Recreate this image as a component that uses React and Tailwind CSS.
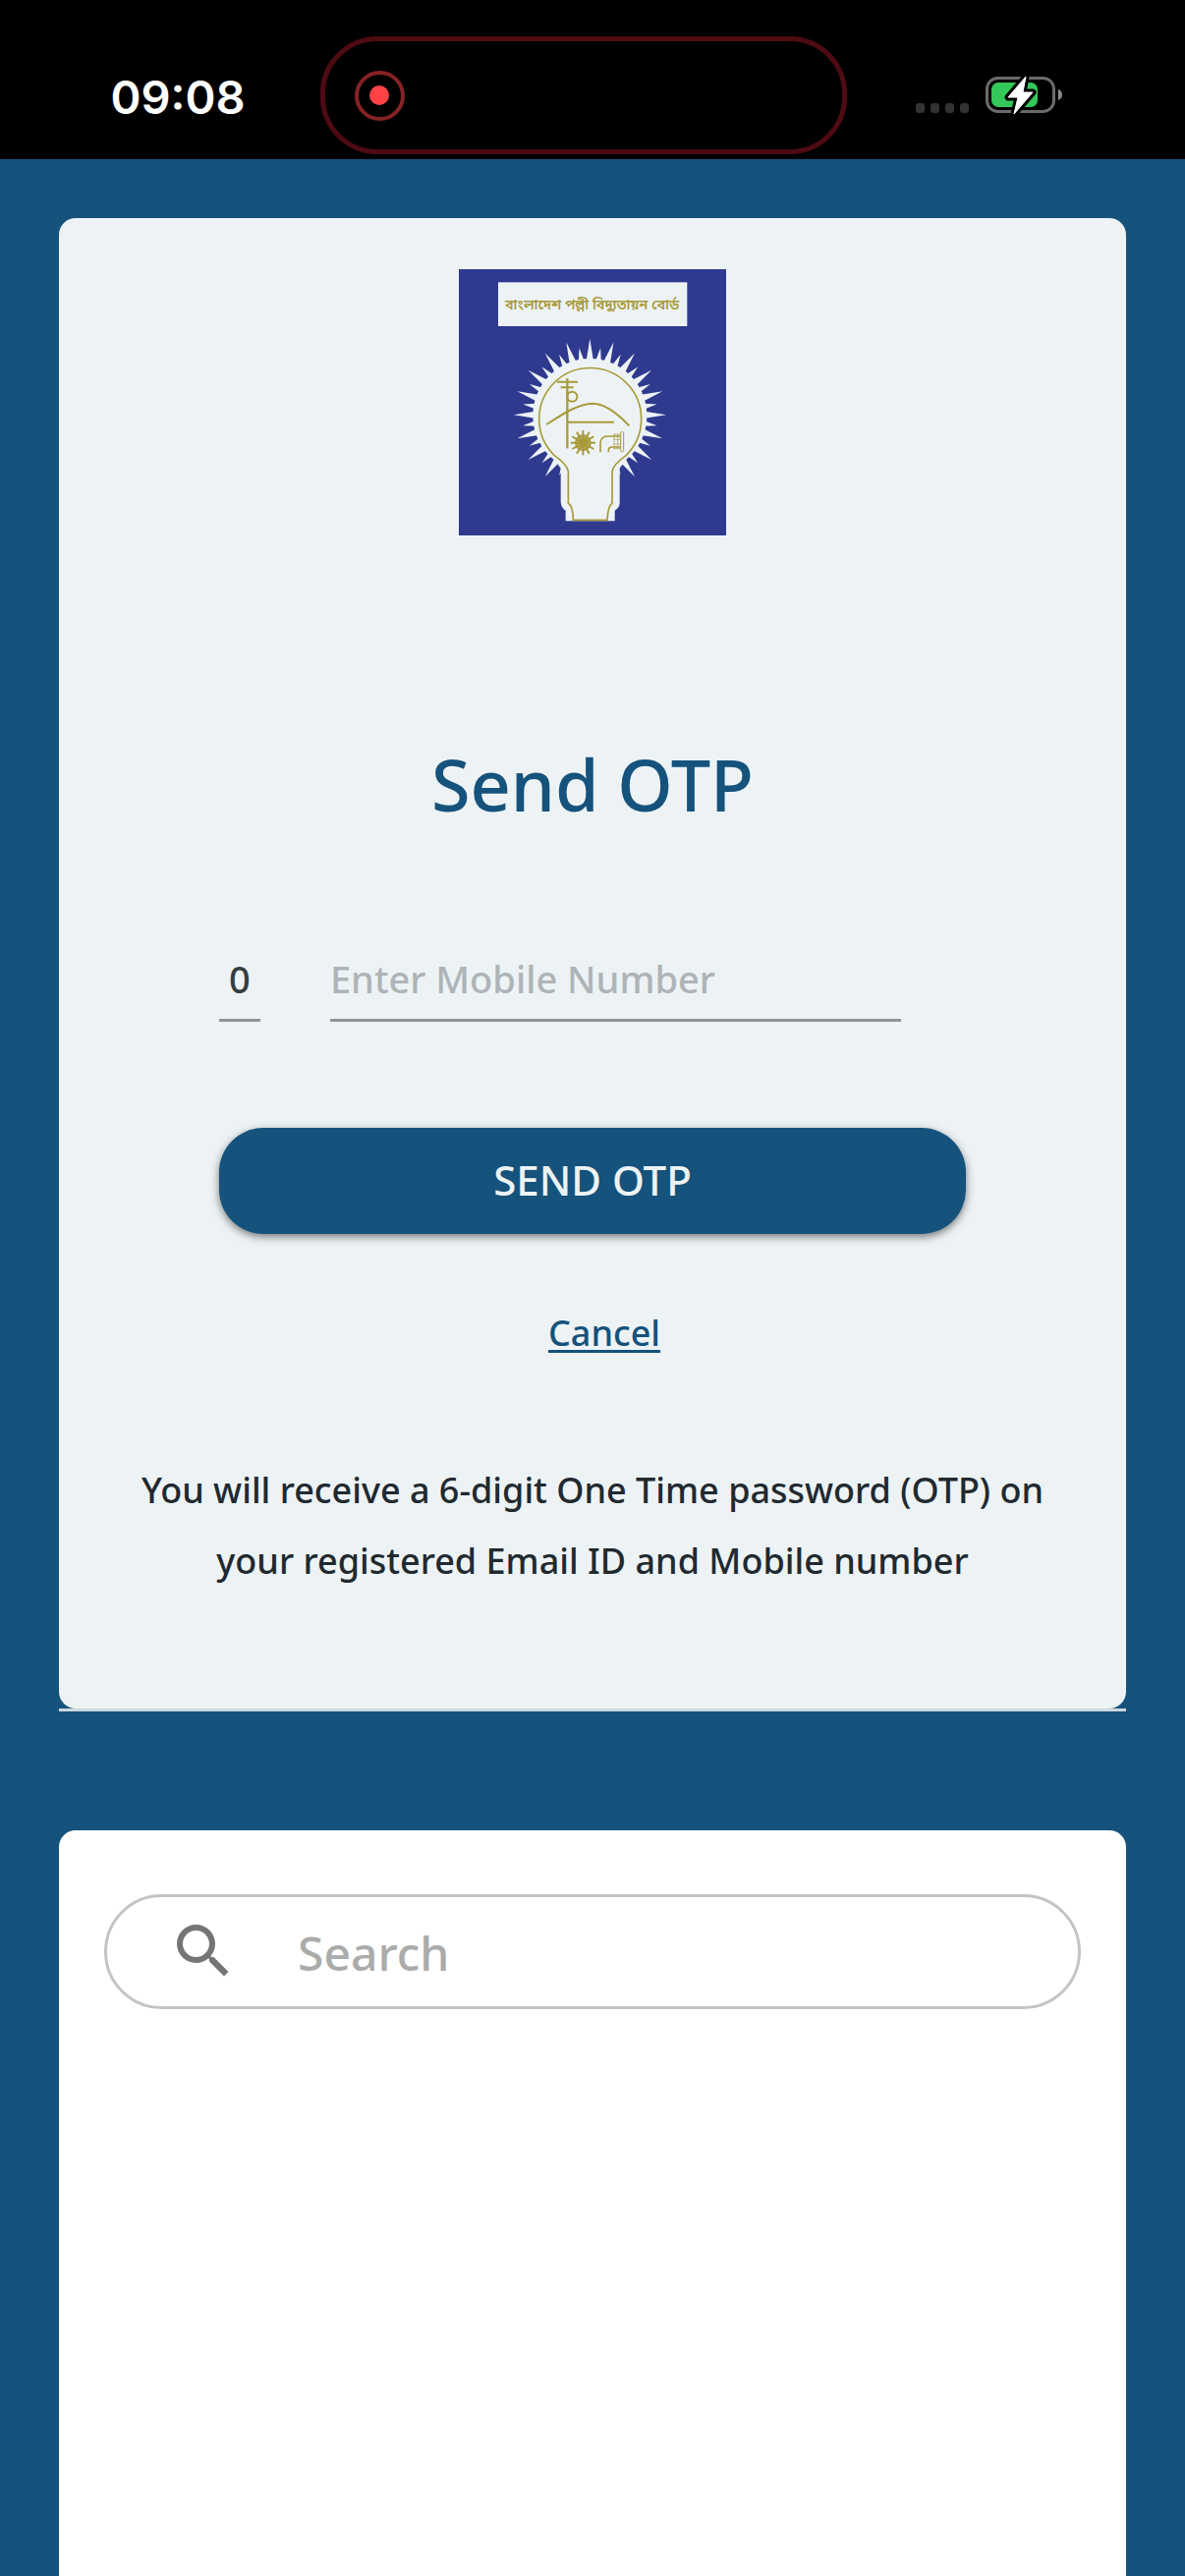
import { useState } from "react";
import { MdSearch } from "react-icons/md";

const GOLD = "#a89a3a";
const PAPER = "#edf3f5";

function polar(deg, r) {
  const a = (deg * Math.PI) / 180;
  return `${(421 + r * Math.sin(a)).toFixed(1)},${(472 - r * Math.cos(a)).toFixed(1)}`;
}

// long and short rays alternate every 9 degrees around the bulb
function rays() {
  const list = [];
  for (let i = -17; i <= 17; i++) {
    const deg = i * 9;
    const long = i % 2 === 0;
    const half = long ? 3.6 : 2.8;
    list.push(
      `${polar(deg - half, 168)} ${polar(deg, long ? 233 : 207)} ${polar(deg + half, 168)}`
    );
  }
  return list;
}

function Logo() {
  return (
    <svg viewBox="21 27 816 813" className="w-[272px] h-[271px]" role="img" aria-label="BREB logo">
      <rect x="21" y="27" width="816" height="813" fill="#2f3a8f" />
      <rect x="141" y="67" width="577" height="134" fill={PAPER} />
      <text
        x="428"
        y="150"
        textAnchor="middle"
        fontSize="43"
        fontWeight="600"
        fill={GOLD}
        className="font-['Noto_Sans_Bengali','Noto_Sans',sans-serif]"
      >
        বাংলাদেশ পল্লী বিদ্যুতায়ন বোর্ড
      </text>

      <g fill={PAPER}>
        {rays().map((points) => (
          <polygon key={points} points={points} />
        ))}
        <circle cx="421" cy="474" r="174" />
        <path d="M300 590 L332 635 V738 Q334 758 347 764 V796 H497 V764 Q510 758 512 742 V635 L545 590 Z" />
      </g>

      <g fill="none" stroke={GOLD} strokeWidth="5">
        <path d="M370 793 Q370 750 355 742 V644 Q352 624 312 595 A156 156 0 1 1 532 595 Q492 624 489 644 V742 Q476 750 474 793 Z" />
        <path d="M289 501 C340 468 385 438 430 437 C470 438 510 472 541 505" strokeWidth="6" />
        <path d="M352 360 V574" strokeWidth="7" />
        <path d="M321 371 H384 M332 388 H371 M352 494 H495" strokeWidth="6" />
        <circle cx="367" cy="416" r="15" strokeWidth="6" />
      </g>

      <g stroke={GOLD} strokeWidth="6">
        {[0, 30, 60, 90, 120, 150].map((deg) => (
          <path key={deg} d="M400 519 V595" transform={`rotate(${deg} 400 557)`} />
        ))}
        <circle cx="400" cy="557" r="25" fill={GOLD} stroke="none" />
        <circle cx="400" cy="557" r="17" fill="none" stroke={PAPER} strokeWidth="2" strokeDasharray="3 6" />
      </g>

      <g fill="none" stroke={GOLD} strokeWidth="5">
        <path d="M453 586 V560 Q453 537 476 537 H513" />
        <path d="M478 586 V580 Q478 570 488 570 H513" />
        <rect x="515" y="524" width="9" height="60" rx="3" strokeWidth="3" />
        <path d="M495 530 V576 M506 530 V576 M493 531 H513 M493 547 H513 M493 561 H513 M493 575 H513" strokeWidth="2" />
      </g>
    </svg>
  );
}

function Battery() {
  const bolt = "M41 0 L23 21 H33 L29 38 L48 16 H38 Z";
  return (
    <svg viewBox="0 -1 79 40" className="w-[79px] h-10" aria-label="Battery charging">
      <rect x="1.5" y="1.5" width="68" height="34" rx="11" fill="none" stroke="#6b6b6d" strokeWidth="3" />
      <rect x="6" y="6" width="47" height="25" rx="7" fill="#34c759" />
      <path d="M74 12.5 Q78 15 78 18.5 Q78 22 74 24 Z" fill="#8a8a8c" />
      <path d={bolt} fill="#fff" stroke="#000" strokeWidth="7" strokeLinejoin="round" />
      <path d={bolt} fill="#fff" stroke="#fff" strokeWidth="1" strokeLinejoin="round" />
    </svg>
  );
}

function StatusBar() {
  return (
    <header className="bg-black h-[162px] pt-[37px] pb-[5px] flex items-stretch">
      <div className="w-[27%] flex items-center justify-end pr-[76px]">
        <span className="text-white text-[47px] leading-[48px] font-semibold font-['Inter',sans-serif] mt-1">
          09:08
        </span>
      </div>
      <div className="w-[536px] border-[5px] border-[#4f0b12] rounded-[58px] flex items-center pl-[30px]">
        <div className="w-[51px] h-[51px] rounded-full border-4 border-[#852225] flex items-center justify-center">
          <div className="w-5 h-5 rounded-full bg-[#ff4246]" />
        </div>
      </div>
      <div className="flex-1 flex items-center pl-[70px]">
        <div className="flex gap-[6px] pt-[26px] mr-[17px]">
          {[0, 1, 2, 3].map((i) => (
            <span key={i} className="w-[9px] h-[10px] rounded-[3px] bg-[#333333]" />
          ))}
        </div>
        <Battery />
      </div>
    </header>
  );
}

function App() {
  const [mobile, setMobile] = useState("");
  const [query, setQuery] = useState("");

  return (
    <div className="min-h-screen flex flex-col bg-[#15527c] font-['Noto_Sans',sans-serif]">
      <StatusBar />

      <main className="flex-1 flex flex-col px-[60px] pt-[60px]">
        <section className="border-b-[3px] border-[#d0d8de]">
          <div className="bg-[#edf3f5] rounded-[17px] pt-[52px] pb-[114px] flex flex-col items-center">
            <Logo />
            <h1 className="mt-[205px] text-[72px] leading-[96px] font-medium text-[#15527c]">
              Send OTP
            </h1>

            <form className="w-[70%] mt-[123px]" onSubmit={(e) => e.preventDefault()}>
              <div className="flex gap-[71px] pr-[66px] text-[38px] leading-[54px] font-medium">
                <input
                  type="text"
                  aria-label="Prefix"
                  value="0"
                  readOnly
                  className="w-[42px] h-[71px] pb-[14px] text-center text-[#363d41] border-b-[3px] border-[#8e9498] outline-none"
                />
                <input
                  type="tel"
                  aria-label="Mobile number"
                  placeholder="Enter Mobile Number"
                  value={mobile}
                  onChange={(e) => setMobile(e.target.value)}
                  className="flex-1 min-w-0 h-[71px] pb-[14px] text-[#363d41] placeholder:text-[#aeb4b7] border-b-[3px] border-[#8e9498] outline-none"
                />
              </div>
              <button
                type="submit"
                className="w-full h-[108px] mt-[108px] pb-[3px] rounded-[45px] bg-[#15527c] text-[#edf3f5] text-[42px] font-medium shadow-[0_3px_8px_rgba(0,0,0,0.5)]"
              >
                SEND OTP
              </button>
            </form>

            <a
              href="#cancel"
              className="mt-[77px] ml-6 text-[36px] leading-[48px] font-medium text-[#15527c] underline decoration-[3px] underline-offset-4"
            >
              Cancel
            </a>

            <p className="mt-[100px] px-[72px] text-[36px] leading-[72px] font-medium text-center text-[#212930]">
              You will receive a 6-digit One Time password (OTP) on your registered Email ID and Mobile number
            </p>
          </div>
        </section>

        <section className="flex-1 mt-[121px] bg-white rounded-t-[17px] px-[46px] pt-[65px]">
          <label className="flex items-center h-[117px] border-[3px] border-[#c4c4c4] rounded-full pl-[62px] pr-12">
            <MdSearch className="w-[72px] h-[72px] -mt-[2px] shrink-0 text-[#757575]" />
            <input
              type="search"
              aria-label="Search"
              placeholder="Search"
              value={query}
              onChange={(e) => setQuery(e.target.value)}
              className="flex-1 min-w-0 mt-[2px] ml-[60px] text-[48px] leading-[66px] font-medium placeholder:text-[#aaacab] outline-none"
            />
          </label>
        </section>
      </main>
    </div>
  );
}

export default App;
